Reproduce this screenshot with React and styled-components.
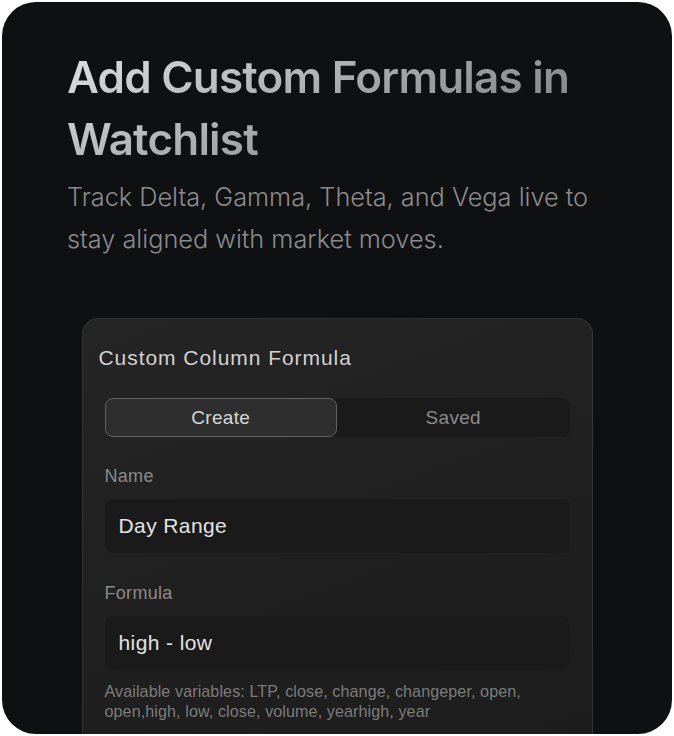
import React, { useState } from "react";
import styled, { createGlobalStyle } from "styled-components";

const GlobalStyle = createGlobalStyle`
  html, body {
    margin: 0;
    padding: 0;
    background: #ffffff;
  }
  * {
    box-sizing: border-box;
  }
`;

const Frame = styled.div`
  margin: 2px;
  width: 670px;
  height: 732px;
  border-radius: 34px;
  background: #0f1012;
  overflow: hidden;
  padding: 44px 0 0;
`;

const Heading = styled.h1`
  margin: 0 0 0 65px;
  width: 520px;
  font-family: "Inter", "Liberation Sans", sans-serif;
  font-weight: 600;
  font-size: 44px;
  line-height: 62px;
  letter-spacing: -0.8px;
  background: linear-gradient(155deg, #e2e2e2 0%, #c4c4c4 25%, #9e9e9e 55%, #828282 85%);
  -webkit-background-clip: text;
  background-clip: text;
  color: transparent;
`;

const Lead = styled.p`
  margin: 6px 0 0 65px;
  width: 540px;
  font-family: "Inter", "Liberation Sans", sans-serif;
  font-weight: 300;
  font-size: 25.3px;
  line-height: 42px;
  color: #8b8b8d;
`;

const Panel = styled.section`
  margin: 58px auto 0;
  width: 511px;
  height: 460px;
  border-radius: 16px;
  border: 1px solid rgba(255, 255, 255, 0.09);
  background: linear-gradient(160deg, #252525 0%, #1f1f1f 60%, #1d1d1d 100%);
  font-family: "Liberation Sans", "Arimo", sans-serif;
  padding: 26px 22px 0 22px;
`;

const PanelTitle = styled.h2`
  margin: 0 0 0 -6px;
  font-weight: 400;
  font-size: 21px;
  line-height: 26px;
  letter-spacing: 0.95px;
  color: #d2d2d2;
`;

const Tabs = styled.div`
  display: grid;
  grid-template-columns: 1fr 1fr;
  margin-top: 27px;
  height: 39px;
  border-radius: 8px;
  background: #1a1a1a;
`;

const Tab = styled.button`
  border: 1px solid ${(p) => (p.$active ? "#626262" : "transparent")};
  background: ${(p) => (p.$active ? "#2e2e2e" : "transparent")};
  border-radius: 8px;
  font-family: inherit;
  font-size: 19px;
  letter-spacing: 0.3px;
  color: ${(p) => (p.$active ? "#d6d6d6" : "#8a8a8a")};
  cursor: pointer;
  padding: 0;
`;

const Field = styled.div`
  display: flex;
  flex-direction: column;
  margin-top: ${(p) => p.$top || 0}px;
`;

const Label = styled.label`
  font-size: 18px;
  line-height: 22px;
  letter-spacing: 0.3px;
  color: #8a8a8a;
  margin-bottom: 12px;
`;

const Input = styled.div`
  height: 54px;
  display: flex;
  align-items: center;
  padding: 0 14px;
  border-radius: 8px;
  background: #1a1a1a;
  font-size: 21px;
  letter-spacing: 0.4px;
  color: #e2e2e2;
`;

const Hint = styled.p`
  margin: 11px 0 0;
  font-size: 16.1px;
  line-height: 20px;
  letter-spacing: 0.1px;
  color: #7c7c7c;
`;

export default function App() {
  const [tab, setTab] = useState("create");

  return (
    <>
      <GlobalStyle />
      <Frame>
        <Heading>Add Custom Formulas in Watchlist</Heading>
        <Lead>
          Track Delta, Gamma, Theta, and Vega live to stay aligned with market
          moves.
        </Lead>

        <Panel>
          <PanelTitle>Custom Column Formula</PanelTitle>
          <Tabs>
            <Tab $active={tab === "create"} onClick={() => setTab("create")}>
              Create
            </Tab>
            <Tab $active={tab === "saved"} onClick={() => setTab("saved")}>
              Saved
            </Tab>
          </Tabs>

          <Field $top={28}>
            <Label>Name</Label>
            <Input>Day Range</Input>
          </Field>

          <Field $top={29}>
            <Label>Formula</Label>
            <Input>high - low</Input>
            <Hint>
              Available variables: LTP, close, change, changeper, open,
              <br />
              open,high, low, close, volume, yearhigh, year
            </Hint>
          </Field>
        </Panel>
      </Frame>
    </>
  );
}
